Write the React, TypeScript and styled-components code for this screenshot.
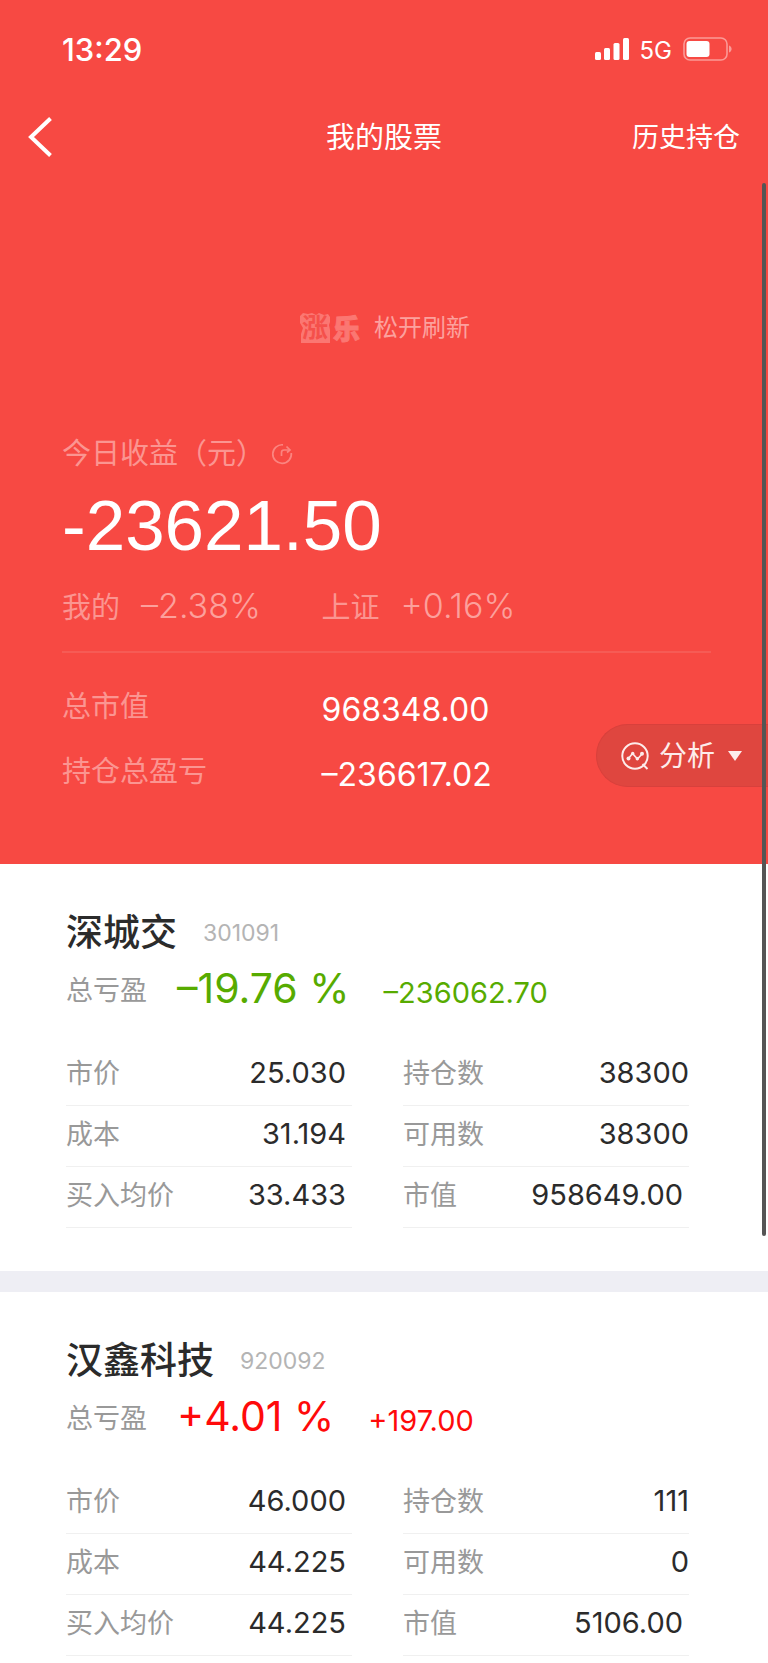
import React from "react";
import styled, { createGlobalStyle } from "styled-components";

const GlobalStyle = createGlobalStyle`
  * { box-sizing: border-box; }
  body {
    margin: 0;
    background: #fff;
    color: #2b2b2b;
    font-family: Inter, "Noto Sans CJK SC", sans-serif;
    font-weight: 400;
  }
  button { font: inherit; color: inherit; border: 0; background: none; padding: 0; cursor: pointer; }
  h1, h2, p, dl, dd, dt { margin: 0; font-weight: inherit; }
`;

const Page = styled.div`
  position: relative;
  min-height: 100vh;
`;

const Header = styled.header`
  position: relative;
  background: #f74943;
  color: #fff;
`;

const StatusBar = styled.div`
  display: flex;
  justify-content: space-between;
  align-items: center;
  height: 98px;
  padding: 0 36px 0 62px;
`;

const Clock = styled.time`
  font-size: 31px;
  font-weight: 550;
`;

const StatusIcons = styled.div`
  display: flex;
  align-items: center;
  gap: 11px;
`;

const Network = styled.span`
  padding-top: 3px;
  font-size: 24px;
  line-height: 30px;
`;

const NavBar = styled.nav`
  display: grid;
  grid-template-columns: 1fr auto 1fr;
  align-items: center;
  height: 78px;
  padding: 0 28px;
`;

const BackButton = styled.button`
  display: flex;
  justify-self: start;
`;

const Title = styled.h1`
  padding-top: 2px;
  font-size: 29px;
  line-height: 40px;
`;

const HistoryLink = styled.a`
  justify-self: end;
  padding-top: 2px;
  font-size: 27px;
  line-height: 40px;
  color: inherit;
  text-decoration: none;
`;

const Refresh = styled.div`
  display: flex;
  justify-content: center;
  align-items: center;
  gap: 14px;
  padding: 128px 0 76px;
  font-size: 24px;
  line-height: 40px;
  color: #fca19e;
`;

const Summary = styled.section`
  padding: 0 57px 66px 62px;
`;

const Muted = styled.span`
  font-size: 29px;
  line-height: 40px;
  color: #fb9591;
`;

const TodayLabel = styled.div`
  display: flex;
  align-items: center;
  gap: 6px;
  margin-top: 6px;
`;

const Profit = styled.p`
  font-family: "Liberation Sans", Arial, sans-serif;
  font-size: 71px;
  line-height: 80px;
  margin: 12px 0 20px;
`;

const Columns = styled.div`
  display: grid;
  grid-template-columns: 2fr 3fr;
  align-items: start;
`;

const Compare = styled.div`
  display: flex;
  align-items: baseline;
  gap: 21px;
`;

const CompareValue = styled.span`
  font-size: 34px;
  line-height: 40px;
  font-weight: 300;
  color: #fca09c;
`;

const Divider = styled.hr`
  height: 2px;
  margin: 23px 0 34px;
  border: 0;
  background: #f65b55;
`;

const Totals = styled.div`
  display: grid;
  gap: 19px;
`;

const TotalValue = styled.span`
  font-size: 32px;
  line-height: 46px;
`;

const AnalyseButton = styled.button`
  && {
    position: absolute;
    right: 0;
    bottom: 77px;
    display: flex;
    align-items: center;
    gap: 10px;
    height: 63px;
    padding: 0 26px 0 24px;
    border: 1px solid #d8403c;
    border-right: 0;
    border-radius: 32px 0 0 32px;
    background: #df463f;
    color: #fdeceb;
    font-size: 28px;
    line-height: 40px;
  }
`;

const Caret = styled.svg`
  margin-left: 3px;
`;

const Card = styled.article`
  padding: 45px 79px 43px 66px;

  & + & {
    border-top: 21px solid #eeeef4;
  }
`;

const CardHead = styled.div`
  display: flex;
  align-items: center;
  gap: 26px;
`;

const StockName = styled.h2`
  font-size: 37px;
  line-height: 48px;
  font-weight: 500;
`;

const Code = styled.span`
  font-size: 23px;
  line-height: 32px;
  color: #b4b4b4;
`;

const Result = styled.div<{ $up: boolean }>`
  display: flex;
  align-items: baseline;
  margin: 1px 0 22px;
  line-height: 61px;
  color: ${(p) => (p.$up ? "#ff0a0a" : "#57ab00")};
`;

const Label = styled.dt`
  font-size: 27px;
  color: #999;
`;

const ResultLabel = styled.span`
  align-self: center;
  font-size: 27px;
  color: #999;
`;

const Percent = styled.span`
  margin: 0 34px 0 30px;
  font-size: 41px;
`;

const Amount = styled.span`
  font-size: 29px;
`;

const Figures = styled.dl`
  display: grid;
  grid-template-columns: 1fr 1fr;
  column-gap: 51px;
`;

const Figure = styled.div<{ $inset: boolean }>`
  display: flex;
  justify-content: space-between;
  align-items: baseline;
  height: 61px;
  padding-right: ${(p) => (p.$inset ? 6 : 0)}px;
  line-height: 56px;
  border-bottom: 1px solid #f0f0f0;
`;

const Value = styled.dd`
  font-size: 29px;
`;

const ScrollThumb = styled.div`
  position: absolute;
  top: 183px;
  right: 2px;
  width: 4px;
  height: 1053px;
  border-radius: 2px;
  background: #555;
`;

const Signal = () => (
  <svg width="34" height="24" viewBox="0 0 34 24" fill="#fff" aria-hidden="true">
    <rect x="0" y="15" width="6" height="8" rx="1.5" />
    <rect x="9" y="11" width="6" height="12" rx="1.5" />
    <rect x="18.500" y="6" width="6" height="17" rx="1.5" />
    <rect x="28" y="1" width="6" height="22" rx="1.5" />
  </svg>
);

const Battery = () => (
  <svg width="49" height="24" viewBox="0 0 49 24" aria-hidden="true">
    <rect x="1" y="1" width="43" height="22" rx="6" fill="none" stroke="#fb9a97" strokeWidth="1.6" />
    <path d="M46 8.500c3.500 1.200 3.500 5.800 0 7z" fill="#fb9a97" />
    <rect x="3.500" y="4" width="23" height="16" rx="3" fill="#fff" />
  </svg>
);

const Logo = () => (
  <svg width="62" height="48" viewBox="0 -8 62 48" fontFamily="Noto Sans CJK SC, sans-serif" aria-hidden="true">
    <path d="M2 4l3-3 5 1 4-1 4 2 3-2 5 2 4-1 2 3v5l-1 3 1 5v13H3V22l2-6-3-5z" fill="#fb7772" />
    <text x="4" y="25" fontSize="26" fontWeight="700" fill="#f5504b">涨</text>
    <text x="35" y="27" fontSize="27" fontWeight="900" fill="#fb7772" stroke="#fb7772" strokeWidth="1">乐</text>
  </svg>
);

const ProfitIcon = () => (
  <svg width="22" height="22" viewBox="0 0 22 22" fill="none" stroke="#fb8580" strokeWidth="1.7" aria-hidden="true">
    <path d="M12 1.800A9.300 9.300 0 1 0 20.300 10" />
    <path d="M10.500 13V9.500q0-2.500 2.500-2.500h5" />
    <path d="M15.500 3.500L19 7l-3 2.500" />
  </svg>
);

const AnalyseIcon = () => (
  <svg width="28" height="28" viewBox="0 0 28 28" fill="none" stroke="currentColor" strokeWidth="2" aria-hidden="true">
    <circle cx="14" cy="14" r="12.700" />
    <path d="M21.500 22l5 5" />
    <path d="M7.500 16.500l4-5 5 5.500 4.500-5" strokeWidth="1.600" />
    <g fill="currentColor" stroke="none">
      <circle cx="7.500" cy="16.500" r="2" />
      <circle cx="11.700" cy="11.500" r="1.700" />
      <circle cx="16.300" cy="16.800" r="1.700" />
      <circle cx="21" cy="11.800" r="2" />
    </g>
  </svg>
);

interface Stock {
  name: string;
  code: string;
  up: boolean;
  percent: string;
  amount: string;
  figures: [string, string][];
}

const stocks: Stock[] = [
  {
    name: "深城交",
    code: "301091",
    up: false,
    percent: "–19.76 %",
    amount: "–236062.70",
    figures: [
      ["市价", "25.030"],
      ["持仓数", "38300"],
      ["成本", "31.194"],
      ["可用数", "38300"],
      ["买入均价", "33.433"],
      ["市值", "958649.00"],
    ],
  },
  {
    name: "汉鑫科技",
    code: "920092",
    up: true,
    percent: "+4.01 %",
    amount: "+197.00",
    figures: [
      ["市价", "46.000"],
      ["持仓数", "111"],
      ["成本", "44.225"],
      ["可用数", "0"],
      ["买入均价", "44.225"],
      ["市值", "5106.00"],
    ],
  },
];

const StockCard = ({ stock }: { stock: Stock }) => (
  <Card>
    <CardHead>
      <StockName>{stock.name}</StockName>
      <Code>{stock.code}</Code>
    </CardHead>
    <Result $up={stock.up}>
      <ResultLabel>总亏盈</ResultLabel>
      <Percent>{stock.percent}</Percent>
      <Amount>{stock.amount}</Amount>
    </Result>
    <Figures>
      {stock.figures.map(([label, value], i) => (
        <Figure key={label} $inset={i % 2 === 0 || label === "市值"}>
          <Label>{label}</Label>
          <Value>{value}</Value>
        </Figure>
      ))}
    </Figures>
  </Card>
);

export default function App() {
  return (
    <Page>
      <GlobalStyle />
      <Header>
        <StatusBar>
          <Clock>13:29</Clock>
          <StatusIcons>
            <Signal />
            <Network>5G</Network>
            <Battery />
          </StatusIcons>
        </StatusBar>
        <NavBar>
          <BackButton aria-label="返回">
            <svg width="25" height="40" viewBox="0 0 25 40" fill="none" stroke="#fff" strokeWidth="4" aria-hidden="true">
              <path d="M22.500 1.500L3 20l19.500 18.500" />
            </svg>
          </BackButton>
          <Title>我的股票</Title>
          <HistoryLink href="#history">历史持仓</HistoryLink>
        </NavBar>
        <Refresh>
          <Logo />
          <span>松开刷新</span>
        </Refresh>
        <Summary>
          <TodayLabel>
            <Muted>今日收益（元）</Muted>
            <ProfitIcon />
          </TodayLabel>
          <Profit>-23621.50</Profit>
          <Columns>
            <Compare>
              <Muted>我的</Muted>
              <CompareValue>–2.38%</CompareValue>
            </Compare>
            <Compare>
              <Muted>上证</Muted>
              <CompareValue>+0.16%</CompareValue>
            </Compare>
          </Columns>
          <Divider />
          <Totals>
            <Columns>
              <Muted>总市值</Muted>
              <TotalValue>968348.00</TotalValue>
            </Columns>
            <Columns>
              <Muted>持仓总盈亏</Muted>
              <TotalValue>–236617.02</TotalValue>
            </Columns>
          </Totals>
        </Summary>
        <AnalyseButton>
          <AnalyseIcon />
          <span>分析</span>
          <Caret width="14" height="12" viewBox="0 0 14 12" fill="currentColor" aria-hidden="true">
            <path d="M0 1h14L7 11z" />
          </Caret>
        </AnalyseButton>
      </Header>
      <main>
        {stocks.map((stock) => (
          <StockCard key={stock.code} stock={stock} />
        ))}
      </main>
      <ScrollThumb />
    </Page>
  );
}
